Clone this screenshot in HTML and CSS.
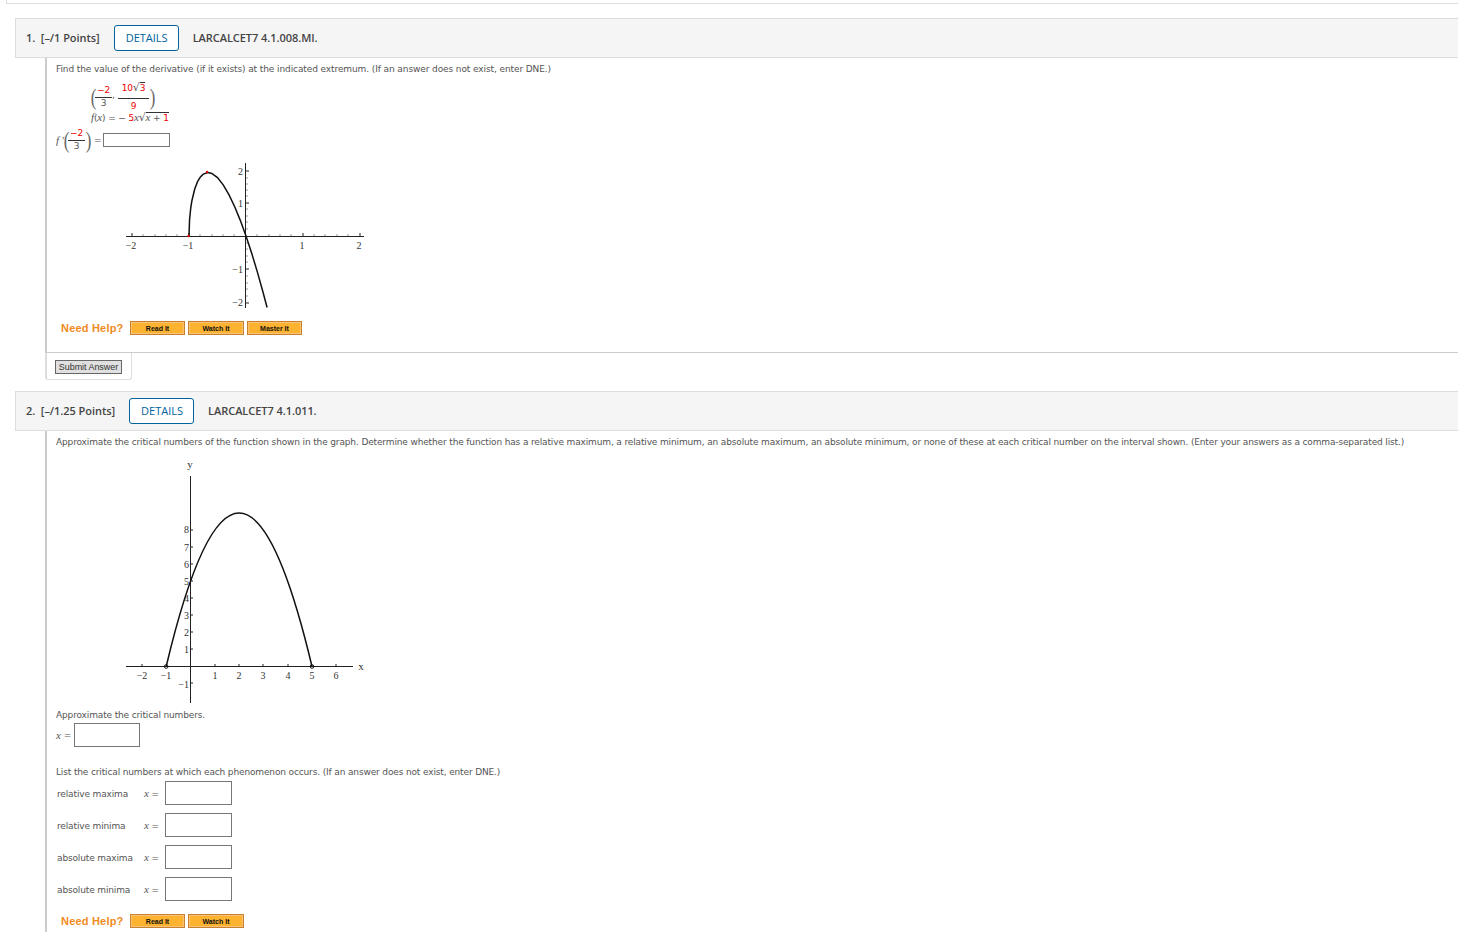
FILE: index.html
```html
<!DOCTYPE html>
<html lang="en">
<head>
  <meta charset="UTF-8">
  <meta name="viewport" content="width=device-width, initial-scale=1.0">
  <title>Assignment</title>
  <link rel="stylesheet" href="styles.css">
</head>
<body>
  <div class="top-bar"></div>

  <!-- Question 1 -->
  <div class="q-header">
    <span class="q-points">1. &nbsp;[–/1 Points]</span>
    <button class="details-btn">DETAILS</button>
    <span class="q-code">LARCALCET7 4.1.008.MI.</span>
  </div>
  <div class="q-body q-body-one">
    <p class="q-text q-text-first">Find the value of the derivative (if it exists) at the indicated extremum. (If an answer does not exist, enter DNE.)</p>
    <div class="math-point">
      <span class="paren">(</span>
      <span class="frac frac-small"><span class="num red">−2</span><span class="den">3</span></span>
      <span class="comma">,</span>
      <span class="frac frac-wide"><span class="num"><span class="red">10</span><span class="root">√</span><span class="radicand red">3</span></span><span class="den red">9</span></span>
      <span class="paren">)</span>
    </div>
    <div class="math-func"><i>f</i>(<i>x</i>) = − <span class="red">5</span><i>x</i><span class="root">√</span><span class="radicand"><i>x</i> + <span class="red">1</span></span></div>
    <div class="math-answer">
      <i class="f-prime">f '</i>
      <span class="paren">(</span>
      <span class="frac frac-small"><span class="num red">−2</span><span class="den">3</span></span>
      <span class="paren">)</span>
      <span class="equals">=</span>
      <input class="answer-small" type="text">
    </div>

    <svg class="graph graph-one" width="250" height="152" viewBox="120 160 250 152">
      <g class="axis">
        <line x1="126" y1="236.5" x2="364" y2="236.5"/>
        <line x1="245.5" y1="163" x2="245.5" y2="308"/>
        <path d="M132 233v3M189 233v3M303 233v3M360 233v3"/>
        <path d="M246 171h3M246 203h3M246 269h3M246 303h3"/>
      </g>
      <g class="axis-minor">
        <path d="M143 234v2M155 234v2M166 234v2M177 234v2M200 234v2M212 234v2M223 234v2M234 234v2M257 234v2M269 234v2M280 234v2M291 234v2M314 234v2M325 234v2M337 234v2M348 234v2"/>
        <path d="M246 178h2M246 184h2M246 190h2M246 196h2M246 209h2M246 216h2M246 222h2M246 229h2M246 243h2M246 249h2M246 256h2M246 262h2M246 276h2M246 283h2M246 289h2M246 296h2"/>
      </g>
      <g transform="translate(246 236) scale(57 -33)">
        <polyline class="curve" points="-1,0 -0.99,0.495 -0.97,0.84 -0.95,1.062 -0.9,1.423 -0.85,1.646 -0.8,1.789 -0.75,1.875 -0.667,1.925 -0.6,1.897 -0.5,1.768 -0.4,1.549 -0.3,1.255 -0.2,0.894 -0.1,0.474 0,0 0.1,-0.524 0.2,-1.095 0.3,-1.71 0.37,-2.165"/>
      </g>
      <circle class="dot-red" cx="188.5" cy="236" r="1.2"/>
      <circle class="dot-red" cx="207" cy="172" r="1.2"/>
      <g class="tick-label">
        <text x="131" y="249" text-anchor="middle">−2</text>
        <text x="188" y="249" text-anchor="middle">−1</text>
        <text x="302" y="249" text-anchor="middle">1</text>
        <text x="359" y="249" text-anchor="middle">2</text>
        <text x="243" y="175" text-anchor="end">2</text>
        <text x="243" y="207" text-anchor="end">1</text>
        <text x="243" y="273" text-anchor="end">−1</text>
        <text x="243" y="306" text-anchor="end">−2</text>
      </g>
    </svg>

    <div class="help-row">
      <span class="need-help">Need Help?</span>
      <button class="help-btn">Read It</button>
      <button class="help-btn help-btn-wide">Watch It</button>
      <button class="help-btn">Master It</button>
    </div>
  </div>
  <div class="q-footer">
    <div class="submit-cell"><button class="submit-btn">Submit Answer</button></div>
  </div>

  <!-- Question 2 -->
  <div class="q-header">
    <span class="q-points">2. &nbsp;[–/1.25 Points]</span>
    <button class="details-btn">DETAILS</button>
    <span class="q-code">LARCALCET7 4.1.011.</span>
  </div>
  <div class="q-body q-body-two">
    <p class="q-text">Approximate the critical numbers of the function shown in the graph. Determine whether the function has a relative maximum, a relative minimum, an absolute maximum, an absolute minimum, or none of these at each critical number on the interval shown. (Enter your answers as a comma-separated list.)</p>

    <svg class="graph graph-two" width="250" height="248" viewBox="120 458 250 248">
      <g class="axis axis-dark">
        <line x1="126" y1="666.5" x2="353" y2="666.5"/>
        <line x1="190.5" y1="476" x2="190.5" y2="703"/>
        <path d="M142 664v3M215 664v3M239 664v3M263 664v3M288 664v3M336 664v3"/>
        <path d="M190 530h3M190 547h3M190 564h3M190 581h3M190 598h3M190 615h3M190 632h3M190 649h3M190 683h3"/>
      </g>
      <g transform="translate(190.5 666.5) scale(24.3 -17.05)">
        <path class="curve" d="M-1 0Q2 18 5 0"/>
      </g>
      <circle class="dot-open" cx="166.2" cy="666.5" r="1.8"/>
      <circle class="dot-open" cx="312" cy="666.5" r="1.8"/>
      <g class="tick-label">
        <text x="190" y="468" text-anchor="middle" class="axis-name">y</text>
        <text x="361" y="670" text-anchor="middle" class="axis-name">x</text>
        <text x="142" y="679" text-anchor="middle">−2</text>
        <text x="166" y="679" text-anchor="middle">−1</text>
        <text x="215" y="679" text-anchor="middle">1</text>
        <text x="239" y="679" text-anchor="middle">2</text>
        <text x="263" y="679" text-anchor="middle">3</text>
        <text x="288" y="679" text-anchor="middle">4</text>
        <text x="312" y="679" text-anchor="middle">5</text>
        <text x="336" y="679" text-anchor="middle">6</text>
        <text x="189" y="533" text-anchor="end">8</text>
        <text x="189" y="551" text-anchor="end">7</text>
        <text x="189" y="568" text-anchor="end">6</text>
        <text x="189" y="585" text-anchor="end">5</text>
        <text x="189" y="602" text-anchor="end">4</text>
        <text x="189" y="619" text-anchor="end">3</text>
        <text x="189" y="636" text-anchor="end">2</text>
        <text x="189" y="653" text-anchor="end">1</text>
        <text x="189" y="688" text-anchor="end">−1</text>
      </g>
    </svg>

    <p class="q-text q-text-crit">Approximate the critical numbers.</p>
    <div class="x-row"><i>x</i> = <input class="answer-box answer-box-narrow" type="text"></div>

    <p class="q-text q-text-list">List the critical numbers at which each phenomenon occurs. (If an answer does not exist, enter DNE.)</p>
    <div class="crit-grid">
      <span class="crit-label">relative maxima</span><span class="crit-x"><i>x</i> =</span><input class="answer-box" type="text">
      <span class="crit-label">relative minima</span><span class="crit-x"><i>x</i> =</span><input class="answer-box" type="text">
      <span class="crit-label">absolute maxima</span><span class="crit-x"><i>x</i> =</span><input class="answer-box" type="text">
      <span class="crit-label">absolute minima</span><span class="crit-x"><i>x</i> =</span><input class="answer-box" type="text">
    </div>

    <div class="help-row help-row-two">
      <span class="need-help">Need Help?</span>
      <button class="help-btn">Read It</button>
      <button class="help-btn help-btn-wide">Watch It</button>
    </div>
  </div>
</body>
</html>
```

FILE: styles.css
```css
/* Reset default styles */
* {
  margin: 0;
  padding: 0;
  box-sizing: border-box;
}

body {
  font-family: "DejaVu Sans", Verdana, sans-serif;
  font-size: 9px;
  letter-spacing: -0.14px;
  color: #555;
  background-color: #fff;
  height: 932px;
  overflow: hidden;
}

.top-bar {
  height: 4px;
  margin-left: 6px;
  margin-bottom: 14px;
  border-left: 1px solid #ddd;
  border-bottom: 1px solid #ddd;
}

.q-header {
  height: 40px;
  margin-left: 15px;
  padding-left: 11px;
  display: flex;
  align-items: center;
  background-color: #f5f5f5;
  border: 1px solid #ddd;
  border-right: none;
  font-family: "Open Sans", sans-serif;
  font-size: 11px;
  font-weight: 600;
  letter-spacing: -0.05px;
  color: #444;
}

.q-points,
.q-code {
  margin-bottom: 2px;
}

.q-points {
  margin-left: -1px;
}

.details-btn {
  width: 65px;
  height: 26px;
  margin: 0 14px;
  padding: 0 0 2px 1px;
  background-color: #fff;
  border: 1px solid #00639c;
  border-radius: 3px;
  font-family: "Open Sans", sans-serif;
  font-size: 11px;
  color: #00639c;
}

.q-body {
  margin-left: 45px;
  padding-left: 9px;
  border-left: 2px solid #ccc;
}

.q-body-one {
  height: 294px;
  padding-top: 4px;
}

.q-body-two {
  height: 520px;
  padding-top: 4px;
}

.q-text {
  line-height: 14px;
  white-space: nowrap;
}

.q-text-first {
  letter-spacing: -0.1px;
}

.red {
  color: #e00;
}

/* Math */
.math-point {
  display: flex;
  align-items: center;
  height: 31px;
  margin: 5px 0 0 34px;
}

.math-func {
  height: 13px;
  line-height: 13px;
  margin-left: 35px;
  margin-top: -1px;
}

.math-func i,
.math-answer i,
.x-row i,
.crit-x i {
  font-family: "Liberation Serif", serif;
  font-size: 11px;
}

.math-answer {
  display: flex;
  align-items: center;
  height: 24px;
  margin-top: 4px;
}

.paren {
  flex: none;
  width: 5px;
  font-family: "Liberation Serif", serif;
  font-size: 24px;
  font-weight: 400;
  line-height: 24px;
  text-align: center;
  transform: scaleX(0.7);
  color: #666;
}

.frac {
  flex: none;
  display: inline-flex;
  flex-direction: column;
  align-items: center;
  line-height: 11px;
}

.frac .num {
  width: 100%;
  padding-bottom: 1px;
  border-bottom: 1px solid #333;
  text-align: center;
  white-space: nowrap;
}

.frac-small {
  width: 17px;
}

.frac-wide {
  width: 31px;
  margin-left: 3px;
}

.frac-wide .num {
  padding-bottom: 4px;
}

.frac-wide .den {
  margin-top: 2px;
}

.comma {
  width: 3px;
  align-self: flex-end;
  margin-bottom: 12px;
}

.root {
  font-size: 11px;
}

.radicand {
  border-top: 1px solid #333;
}

.f-prime {
  flex: none;
  width: 7px;
  white-space: nowrap;
}

.equals {
  flex: none;
  width: 6px;
  margin: 0 3px 0 4px;
}

.answer-small {
  width: 67px;
  height: 14px;
  border: 1px solid #777;
  background: #fff;
}

.answer-box {
  width: 67px;
  height: 24px;
  border: 1px solid #777;
  background: #fff;
}

.answer-box-narrow {
  width: 66px;
}

/* Graphs */
.graph {
  display: block;
  margin-left: 64px;
}

.graph-one {
  margin-top: 8px;
}

.graph-two {
  margin-top: 9px;
}

.axis line,
.axis path {
  stroke: #222;
  stroke-width: 1;
  fill: none;
}

.axis-minor path {
  stroke: #999;
  stroke-width: 1;
  fill: none;
}

.curve {
  fill: none;
  stroke: #111;
  stroke-width: 1.5;
  vector-effect: non-scaling-stroke;
}

.dot-red {
  fill: #e00;
}

.dot-open {
  fill: none;
  stroke: #111;
  stroke-width: 1;
}

.tick-label text {
  font-family: "Liberation Serif", serif;
  font-size: 10px;
  letter-spacing: 0;
  fill: #333;
}

.tick-label .axis-name {
  font-size: 11px;
}

/* Help buttons */
.help-row {
  display: flex;
  align-items: center;
  height: 14px;
  margin: 9px 0 0 5px;
}

.help-row-two {
  margin-top: 13px;
}

.need-help {
  width: 69px;
  font-family: "Liberation Sans", Arial, sans-serif;
  font-size: 11px;
  font-weight: 700;
  letter-spacing: 0.2px;
  color: #f08a1d;
}

.help-btn {
  width: 55px;
  height: 14px;
  margin-right: 3px;
  border: 1px solid #c9812e;
  box-shadow: inset 0 0 0 1px #f9c27a;
  background: #fdb32f;
  font-family: "Liberation Sans", Arial, sans-serif;
  font-size: 7px;
  font-weight: 700;
  letter-spacing: 0;
  color: #111;
}

.help-btn-wide {
  width: 56px;
}

/* Submit */
.q-footer {
  margin-left: 45px;
  height: 39px;
  border-top: 1px solid #ccc;
}

.submit-cell {
  width: 87px;
  height: 27px;
  padding: 7px 0 0 8px;
  border: 1px solid #ddd;
  border-top: none;
  border-left-width: 2px;
  border-radius: 0 0 3px 3px;
}

.submit-btn {
  display: block;
  width: 67px;
  height: 14px;
  background-color: #e0e0e0;
  border: 1px solid #666;
  font-family: "Liberation Sans", Arial, sans-serif;
  font-size: 9px;
  letter-spacing: -0.05px;
  color: #333;
}

/* Question 2 form */
.q-text-crit {
  margin-top: 2px;
}

.x-row {
  display: flex;
  align-items: center;
  gap: 3px;
  height: 24px;
  margin-top: 1px;
}

.q-text-list {
  margin-top: 18px;
}

.crit-grid {
  display: grid;
  grid-template-columns: 88px 21px 67px;
  grid-auto-rows: 24px;
  row-gap: 8px;
  align-items: center;
  margin-top: 2px;
}

.crit-label {
  padding-left: 1px;
  padding-top: 2px;
}
```
